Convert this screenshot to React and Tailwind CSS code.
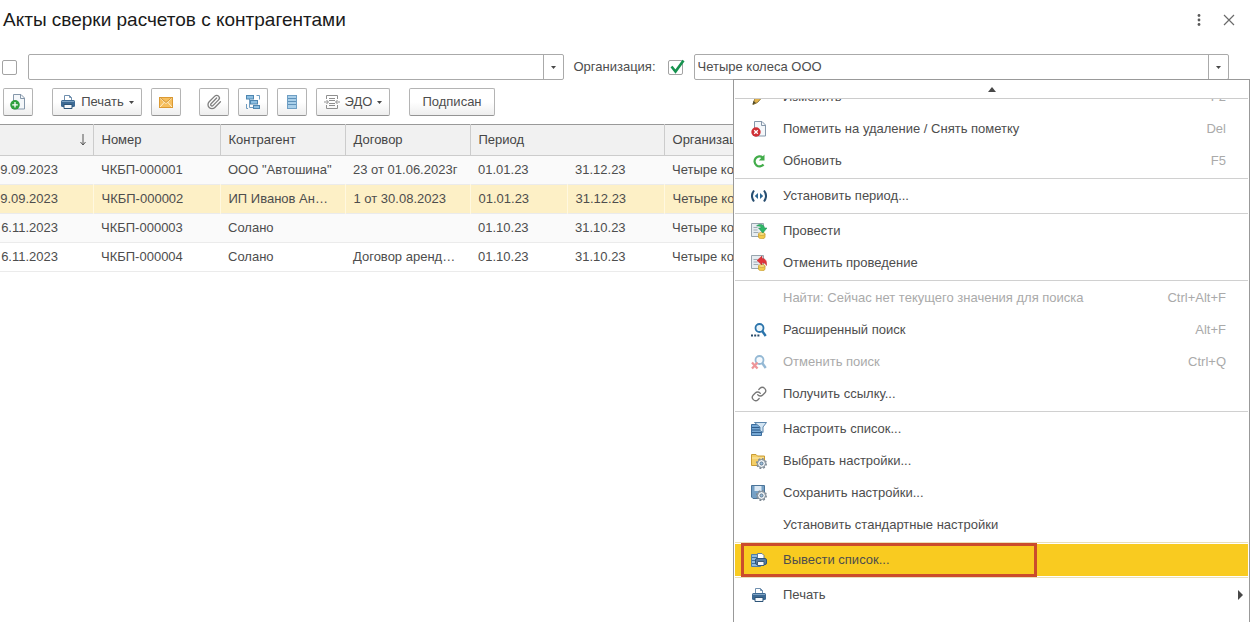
import { useState } from 'react';
import clsx from 'clsx';
import { Link as LinkGlyph, Paperclip } from 'lucide-react';

function PageIcon({ badge }) {
  return (
    <svg viewBox="0 0 16 16" className="size-4 shrink-0" fill="none">
      <path d="M3.500 .5h7.500l3.500 3.500v11h-11z" fill="#f4f7fa" stroke="#8597aa" />
      <path d="M10.500 .5v4h4" stroke="#8597aa" />
      {badge === 'add' ? (
        <>
          <circle cx="5" cy="10.800" r="4.800" fill="#2fa03c" />
          <path d="M5 8v5.600M2.200 10.800h5.600" stroke="#fff" strokeWidth="1.300" />
        </>
      ) : (
        <>
          <circle cx="5" cy="11" r="4.700" fill="#cf2f35" />
          <path d="M3.200 9.200l3.600 3.600M6.800 9.200l-3.600 3.600" stroke="#fff" strokeWidth="1.300" />
        </>
      )}
    </svg>
  );
}

function PrinterIcon() {
  return (
    <svg viewBox="0 0 16 16" className="size-4 shrink-0" fill="none">
      <path d="M4.500 7V1.500h5l2 2V7" fill="#fff" stroke="#6f8fae" />
      <path d="M9.500 1.500v2h2" stroke="#6f8fae" />
      <rect x="1" y="6" width="14" height="7" rx="1.500" fill="#3d6a94" />
      <path d="M2 7.500h12" stroke="#7ea3c4" />
      <path d="M4 10.500h8v4H4z" fill="#f6f9fc" stroke="#2d5478" />
    </svg>
  );
}

function MailIcon() {
  return (
    <svg viewBox="0 0 16 16" className="size-4 shrink-0" fill="none">
      <rect x="1.500" y="3.500" width="13" height="10" fill="#f6bf5f" stroke="#dc9a33" />
      <path d="M2 4l6 5.500L14 4M2 13l4.500-5M14 13l-4.500-5" stroke="#fff0cd" />
      <path d="M2 3.500l6 5 6-5" stroke="#c98a2b" strokeWidth=".8" />
    </svg>
  );
}

function StructureIcon() {
  return (
    <svg viewBox="0 0 16 16" className="size-4 shrink-0" fill="none">
      <path d="M4.500 5v8.500H9M4.500 7.500H7M11.500 1.500h3v4M1.500 10v4.500h1.500" stroke="#6f9cc0" />
      <rect x="1.500" y="1.500" width="7" height="3.500" fill="#8dbfe2" stroke="#4e86b0" />
      <rect x="5.500" y="6.500" width="7" height="3.500" fill="#8dbfe2" stroke="#4e86b0" />
      <rect x="8.500" y="11.500" width="6" height="3" fill="#8dbfe2" stroke="#4e86b0" />
    </svg>
  );
}

function ListIcon() {
  return (
    <svg viewBox="0 0 16 16" className="size-4 shrink-0" fill="none">
      <rect x="3.500" y="1.500" width="9" height="13" fill="#a9cfe9" stroke="#6f9fc4" />
      <path d="M4 4.500h8M4 7.500h8M4 10.500h8" stroke="#5f92ba" />
    </svg>
  );
}

function EdoIcon() {
  return (
    <svg viewBox="0 0 16 16" className="size-4 shrink-0" fill="none" stroke="#8f8f8f">
      <path d="M2.500 5V1.500h11V5M2.500 11v3.500h11V11M5 4.500h6M5 6.500h6M5 9.500h6M5 11.500h6M0 8h4M12 8h4" />
      <path d="M2.500 6l2 2-2 2M13.500 6l-2 2 2 2" />
    </svg>
  );
}

function PencilIcon() {
  return (
    <svg viewBox="0 0 16 16" className="size-4 shrink-0" fill="none">
      <path d="M11 2l3 3-7.500 8.500-4.500 2 1.500-5z" fill="#e2b14b" stroke="#8f7b3c" />
      <path d="M1.500 15.500l1-3.500 2.500 2z" fill="#4e4a2f" />
    </svg>
  );
}

function RefreshIcon() {
  return (
    <svg viewBox="0 0 16 16" className="size-4 shrink-0" fill="none">
      <path d="M12.500 11.500a5 5 0 1 1-.8-7" stroke="#42ac4a" strokeWidth="2.200" />
      <path d="M13.500 1.500v6H7.800z" fill="#42ac4a" />
    </svg>
  );
}

function PeriodIcon() {
  return (
    <svg viewBox="0 0 16 16" className="size-4 shrink-0" fill="none">
      <path d="M3 2.500c-2.600 3.500-2.600 7.500 0 11M13 2.500c2.600 3.500 2.600 7.500 0 11" stroke="#284e70" strokeWidth="2" />
      <path d="M7 5v6L3.800 8zM9 5v6l3.200-3z" fill="#2c6591" />
    </svg>
  );
}

function PostIcon({ cancel }) {
  return (
    <svg viewBox="0 0 16 16" className="size-4 shrink-0" fill="none">
      <path d="M.5 .5h12v13H.5z" fill="#e7edf1" stroke="#98a5ae" />
      <path d="M2.500 4.500h4M2.500 7h4M2.500 9.500h5" stroke="#9fabb4" />
      <path d="M7.500 11v3c0 2.300 6.500 2.300 6.500 0v-3z" fill="#f3cc4c" stroke="#c99f32" strokeWidth=".8" />
      <ellipse cx="10.800" cy="11" rx="3.300" ry="1.400" fill="#fae58c" stroke="#c99f32" strokeWidth=".8" />
      {cancel ? (
        <path d="M6 5.500L11 1v2.500c3.500 0 5 2.500 4.500 7-1-2-2.300-2.800-4.500-2.600V10z" fill="#e0343a" stroke="#b92329" strokeWidth=".5" />
      ) : (
        <path d="M5.500 3C7 .8 13 .3 13.500 5H16l-4.200 5L7.500 5H10c0-2-2.500-2-4.500-2z" fill="#2fb768" stroke="#198a4a" strokeWidth=".5" />
      )}
    </svg>
  );
}

function SearchIcon({ cancel }) {
  return (
    <svg viewBox="0 0 16 16" className={clsx('size-4 shrink-0', cancel && 'opacity-50')} fill="none">
      <circle cx="8.500" cy="6" r="4" fill="#eaf5fc" stroke="#2b74ab" strokeWidth="1.800" />
      <path d="M11.200 9l3.500 5" stroke="#2b74ab" strokeWidth="2.400" />
      {cancel ? (
        <path d="M1 8.500l5.500 6M6.500 8.500L1 14.500" stroke="#dc2e35" strokeWidth="2.300" />
      ) : (
        <path d="M0 13.500h2M3.200 13.500h2M6.400 13.500h2" stroke="#294b69" strokeWidth="2" />
      )}
    </svg>
  );
}

function FilterListIcon() {
  return (
    <svg viewBox="0 0 16 16" className="size-4 shrink-0" fill="none">
      <path d="M.5 3.500h10v11H.5z" fill="#76a8d4" stroke="#3d6e9e" />
      <path d="M1 6.500h9M1 9h9M1 11.500h9" stroke="#2f5d8c" />
      <path d="M3.500 1.500h12L12 6v5.500L9 9.500V6z" fill="#d3e5f3" stroke="#5d86ac" />
    </svg>
  );
}

function Gear() {
  return (
    <>
      <circle cx="10.500" cy="10.500" r="4.600" stroke="#7c8791" strokeWidth="1.800" strokeDasharray="1.900 1.700" />
      <circle cx="10.500" cy="10.500" r="4" fill="#edf1f4" stroke="#7b8894" />
      <circle cx="10.500" cy="10.500" r="1.500" fill="#9cbfdc" stroke="#5e7890" />
    </>
  );
}

function FolderGearIcon() {
  return (
    <svg viewBox="0 0 16 16" className="size-4 shrink-0" fill="none">
      <path d="M.5 12.500v-11h4.500l1.500 1.500h7v9.500z" fill="#f4cf68" stroke="#c99c35" />
      <path d="M1 5h12" stroke="#fbe9af" />
      <Gear />
    </svg>
  );
}

function DiskGearIcon() {
  return (
    <svg viewBox="0 0 16 16" className="size-4 shrink-0" fill="none">
      <path d="M.5.5h13v13H2L.5 12z" fill="#75a0c5" stroke="#4b7499" />
      <path d="M3.500 1h7v5h-7z" fill="#dce9f4" />
      <Gear />
    </svg>
  );
}

function PrintListIcon() {
  return (
    <svg viewBox="0 0 16 16" className="size-4 shrink-0" fill="none">
      <path d="M.5 2.500h9v12h-9z" fill="#8fb9db" stroke="#4f7fa7" />
      <path d="M1 5.500h8M1 8.500h8M1 11.500h8" stroke="#3e719e" />
      <path d="M6.500 7V1.500h4.500l2 2V7" fill="#fff" stroke="#637d94" />
      <rect x="4.500" y="6.500" width="11" height="6" rx="1.500" fill="#547ca2" stroke="#2f5478" />
      <path d="M6.500 9.500h6.500v4H6.500z" fill="#f5f8fa" stroke="#3e5d79" />
    </svg>
  );
}

function Arrow({ dir }) {
  const points = { up: '0,5 4,0 8,5', down: '0,0 5,0 2.5,3', right: '0,0 5,5 0,10' };
  const sizes = { up: 'h-[5px] w-2', down: 'h-[3px] w-[5px]', right: 'h-[10px] w-[5px]' };
  return (
    <svg className={clsx('shrink-0', sizes[dir])} fill="#484848">
      <polygon points={points[dir]} />
    </svg>
  );
}

function ComboBox({ label, id, value, onChange }) {
  return (
    <div className="flex h-[26px] min-w-0 flex-1 rounded-[2px] border border-[#aaa] bg-white">
      <input
        id={id}
        aria-label={label}
        value={value}
        onChange={(e) => onChange(e.target.value)}
        className="min-w-0 flex-1 px-[3px] text-[#4d4d4d] outline-none"
      />
      <button type="button" aria-label="Выбрать" className="grid w-5 place-items-center border-l border-[#aaa]">
        <Arrow dir="down" />
      </button>
    </div>
  );
}

function CheckBox({ label, checked, onChange }) {
  return (
    <span className="relative size-[15px] shrink-0">
      <input
        type="checkbox"
        aria-label={label}
        checked={checked}
        onChange={(e) => onChange(e.target.checked)}
        className="block size-[15px] appearance-none rounded-[2px] border border-[#a3a3a3] bg-white"
      />
      {checked && (
        <svg viewBox="0 0 16 16" className="pointer-events-none absolute -top-px left-px size-4" fill="none">
          <path d="M2.500 7.500l4 5L14.500 1.500" stroke="#16924f" strokeWidth="2.600" />
        </svg>
      )}
    </span>
  );
}

function ToolButton({ label, className, children }) {
  return (
    <button
      type="button"
      aria-label={label}
      className={clsx(
        'flex h-7 items-center justify-center rounded-[2px] border border-[#b4b4b4] border-b-[#949494] bg-linear-to-b from-white from-50% to-[#eee] text-[#4d4d4d]',
        className,
      )}
    >
      {children}
    </button>
  );
}

const rows = [
  { fecha: '9.09.2023', numero: 'ЧКБП-000001', contra: 'ООО "Автошина"', dogovor: '23 от 01.06.2023г', desde: '01.01.23', hasta: '31.12.23' },
  { fecha: '9.09.2023', numero: 'ЧКБП-000002', contra: 'ИП Иванов Ан…', dogovor: '1 от 30.08.2023', desde: '01.01.23', hasta: '31.12.23' },
  { fecha: '6.11.2023', numero: 'ЧКБП-000003', contra: 'Солано', dogovor: '', desde: '01.10.23', hasta: '31.10.23' },
  { fecha: '6.11.2023', numero: 'ЧКБП-000004', contra: 'Солано', dogovor: 'Договор аренд…', desde: '01.10.23', hasta: '31.10.23' },
];

const menu = [
  [
    { text: 'Пометить на удаление / Снять пометку', keys: 'Del', icon: <PageIcon badge="delete" /> },
    { text: 'Обновить', keys: 'F5', icon: <RefreshIcon /> },
  ],
  [{ text: 'Установить период...', icon: <PeriodIcon /> }],
  [
    { text: 'Провести', icon: <PostIcon /> },
    { text: 'Отменить проведение', icon: <PostIcon cancel /> },
  ],
  [
    { text: 'Найти: Сейчас нет текущего значения для поиска', keys: 'Ctrl+Alt+F', disabled: true },
    { text: 'Расширенный поиск', keys: 'Alt+F', icon: <SearchIcon /> },
    { text: 'Отменить поиск', keys: 'Ctrl+Q', icon: <SearchIcon cancel />, disabled: true },
    { text: 'Получить ссылку...', icon: <LinkGlyph size={16} color="#777" /> },
  ],
  [
    { text: 'Настроить список...', icon: <FilterListIcon /> },
    { text: 'Выбрать настройки...', icon: <FolderGearIcon /> },
    { text: 'Сохранить настройки...', icon: <DiskGearIcon /> },
    { text: 'Установить стандартные настройки' },
  ],
  [{ text: 'Вывести список...', icon: <PrintListIcon />, active: true }],
  [{ text: 'Печать', icon: <PrinterIcon />, submenu: true }],
];

function MenuItem({ text, keys, icon, disabled, active, submenu }) {
  return (
    <button
      type="button"
      role="menuitem"
      disabled={disabled}
      className={clsx(
        'relative flex h-8 w-full shrink-0 items-center gap-4 pl-4 text-left',
        submenu ? 'pr-[5px]' : 'pr-[22px]',
        disabled ? 'text-[#aaa]' : 'text-[#4d4d4d]',
        active && 'bg-[#f9cb20]',
      )}
    >
      <span className="size-4 shrink-0">{icon}</span>
      <span className="flex-1">{text}</span>
      {keys && <span className="text-[#aaa]">{keys}</span>}
      {submenu && <Arrow dir="right" />}
      {active && <span className="absolute -inset-y-px left-[6px] w-[296px] border-3 border-[#cb4c2c]" />}
    </button>
  );
}

function MoreMenu() {
  return (
    <div role="menu" className="absolute right-0 top-[79px] w-[517px] border border-[#999] bg-white px-px pb-10">
      <button type="button" aria-label="Прокрутить вверх" className="grid h-[19px] w-full place-items-center border-b border-[#ccc]">
        <Arrow dir="up" />
      </button>
      {/* scrolled: only the lower part of this item is visible */}
      <div className="flex h-[14px] items-end overflow-hidden">
        <MenuItem text="Изменить" keys="F2" icon={<PencilIcon />} />
      </div>
      {menu.map((group, i) => (
        <div key={i}>
          {i > 0 && <div className={clsx('my-px h-px', i < 5 ? 'bg-[#d0d0d0]' : 'bg-[#eadfb8]')} />}
          {group.map((item) => (
            <MenuItem key={item.text} {...item} />
          ))}
        </div>
      ))}
    </div>
  );
}

export default function App() {
  const [filtro, setFiltro] = useState('');
  const [filtroOn, setFiltroOn] = useState(false);
  const [org, setOrg] = useState('Четыре колеса ООО');
  const [orgOn, setOrgOn] = useState(true);

  return (
    <div className="relative h-screen overflow-hidden bg-white font-['Liberation_Sans',Arial,sans-serif] text-[13px] text-[#4d4d4d]">
      <header className="flex h-10 items-center pl-[3px] pr-[14px]">
        <h1 className="flex-1 text-[19px] text-[#1a1a1a]">Акты сверки расчетов с контрагентами</h1>
        <button type="button" aria-label="Ещё" className="mr-4 grid size-[14px] place-items-center">
          <svg viewBox="0 0 14 14" className="size-[14px]" fill="#5a5a5a">
            <circle cx="7" cy="2.500" r="1.400" />
            <circle cx="7" cy="7" r="1.400" />
            <circle cx="7" cy="11.500" r="1.400" />
          </svg>
        </button>
        <button type="button" aria-label="Закрыть" className="grid size-[14px] place-items-center">
          <svg viewBox="0 0 14 14" className="size-[14px]" stroke="#6a6a6a" strokeWidth="1.200">
            <path d="M2 2l10 10M12 2L2 12" />
          </svg>
        </button>
      </header>

      <div className="mt-[14px] flex items-center pl-[2px] pr-[21px]">
        <CheckBox label="Отбор" checked={filtroOn} onChange={setFiltroOn} />
        <div className="ml-[11px] flex min-w-0 flex-1">
          <ComboBox label="Отбор" value={filtro} onChange={setFiltro} />
        </div>
        <label htmlFor="org" className="ml-[10px] w-[94px]">Организация:</label>
        <CheckBox label="Организация" checked={orgOn} onChange={setOrgOn} />
        <div className="ml-[11px] flex min-w-0 flex-1">
          <ComboBox id="org" value={org} onChange={setOrg} />
        </div>
      </div>

      <div className="mt-2 flex pl-[3px]">
        <ToolButton label="Создать" className="w-[30px]"><PageIcon badge="add" /></ToolButton>
        <ToolButton className="ml-[19px] w-[90px] gap-[5px]"><PrinterIcon />Печать<Arrow dir="down" /></ToolButton>
        <ToolButton label="Отправить" className="ml-[9px] w-[30px]"><MailIcon /></ToolButton>
        <ToolButton label="Присоединенные файлы" className="ml-[18px] w-[30px]">
          <Paperclip size={16} color="#808080" />
        </ToolButton>
        <ToolButton label="Структура" className="ml-[9px] w-[30px]"><StructureIcon /></ToolButton>
        <ToolButton label="Список" className="ml-[9px] w-[30px]"><ListIcon /></ToolButton>
        <ToolButton className="ml-[9px] w-[74px] gap-[5px]"><EdoIcon />ЭДО<Arrow dir="down" /></ToolButton>
        <ToolButton className="ml-[19px] w-[86px]">Подписан</ToolButton>
      </div>

      <table className="mt-2 w-full table-fixed border-collapse">
        <colgroup>
          <col className="w-[93px]" />
          <col className="w-[127px]" />
          <col className="w-[125px]" />
          <col className="w-[125px]" />
          <col className="w-[97px]" />
          <col className="w-[97px]" />
          <col className="w-[98px]" />
          <col />
        </colgroup>
        <thead>
          <tr className="h-[31px] border-y border-b-[#ccc] border-t-[#999] bg-[#f1f1f1] text-left text-[#454545] *:border-r *:border-[#ccc] *:px-2 *:font-normal">
            <th aria-label="Дата">
              <svg viewBox="0 0 8 12" className="ml-auto mr-[-2px] h-3 w-2" fill="none" stroke="#555">
                <path d="M4 0v11M1.500 8L4 11l2.500-3" />
              </svg>
            </th>
            <th>Номер</th>
            <th>Контрагент</th>
            <th>Договор</th>
            <th colSpan={2}>Период</th>
            <th>Организация</th>
            <th />
          </tr>
        </thead>
        <tbody>
          {rows.map((r, i) => (
            <tr
              key={r.numero}
              className={clsx(
                'h-[29px] border-b border-[#ebebeb] *:overflow-hidden *:whitespace-nowrap *:px-2',
                i === 1 ? 'bg-[#fdf0c6] *:border-r *:border-[#fff8e0]' : i === 3 ? 'bg-white' : 'bg-[#fafafa]',
              )}
            >
              <td>
                <span className="-ml-2 flex w-[58px] justify-end overflow-hidden">{r.fecha}</span>
              </td>
              <td>{r.numero}</td>
              <td>{r.contra}</td>
              <td>{r.dogovor}</td>
              <td>{r.desde}</td>
              <td>{r.hasta}</td>
              <td>Четыре колеса ООО</td>
              <td />
            </tr>
          ))}
        </tbody>
      </table>

      <MoreMenu />
    </div>
  );
}
